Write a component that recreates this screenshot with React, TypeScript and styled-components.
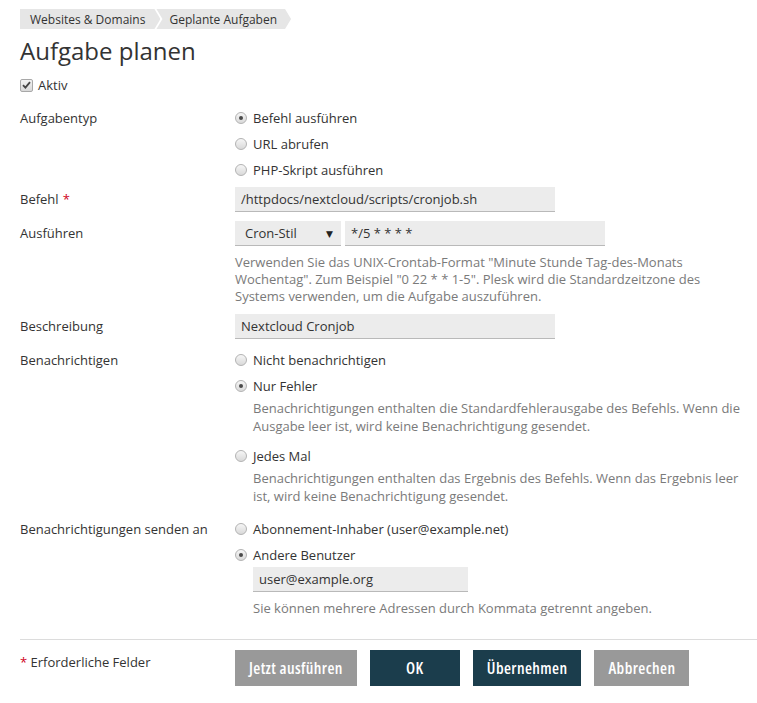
import React from "react";
import styled, { createGlobalStyle } from "styled-components";

const Global = createGlobalStyle`
  html, body { margin: 0; padding: 0; background: #fff; }
  body { font-family: "Open Sans", "DejaVu Sans", sans-serif; font-size: 13px; color: #333; }
  * { box-sizing: border-box; }
`;

const Page = styled.div`
  padding: 9px 0 16px 20px;
`;

const Crumbs = styled.nav`
  display: flex;
  height: 20px;
`;

const Crumb = styled.span<{ $first?: boolean }>`
  display: flex;
  align-items: center;
  height: 20px;
  background: #e6e6e6;
  font-size: 12px;
  color: #333;
  padding: ${(p) => (p.$first ? "0 15px 0 10px" : "0 14px 0 13px")};
  margin-left: ${(p) => (p.$first ? "0" : "-4px")};
  clip-path: ${(p) =>
    p.$first
      ? "polygon(0 0, calc(100% - 6px) 0, 100% 50%, calc(100% - 6px) 100%, 0 100%)"
      : "polygon(0 0, calc(100% - 6px) 0, 100% 50%, calc(100% - 6px) 100%, 0 100%, 6px 50%)"};
`;

const Title = styled.h1`
  margin: 6px 0 0;
  font-size: 24px;
  line-height: 32px;
  font-weight: 400;
  color: #333;
`;

const CheckLine = styled.label`
  display: flex;
  align-items: center;
  gap: 5px;
  height: 18px;
  margin-top: 9px;
`;

const CheckBox = styled.span`
  width: 13px;
  height: 13px;
  border: 1px solid #a8a8a8;
  border-radius: 2px;
  background: linear-gradient(#f2f2f2, #d8d8d8);
  display: flex;
  align-items: center;
  justify-content: center;
`;

const Form = styled.div`
  display: grid;
  grid-template-columns: 215px 1fr;
  align-items: start;
  margin-top: 15px;
`;

const Label = styled.div<{ $mt?: number }>`
  margin-top: ${(p) => p.$mt ?? 0}px;
  line-height: 18px;
  display: flex;
  align-items: center;
  gap: 4px;
`;

const Req = styled.span`
  color: #d0021b;
`;

const Cell = styled.div<{ $mt?: number }>`
  margin-top: ${(p) => p.$mt ?? 0}px;
  display: flex;
  flex-direction: column;
`;

const RadioList = styled.div`
  display: flex;
  flex-direction: column;
`;

const RadioItem = styled.label<{ $mt?: number }>`
  display: flex;
  align-items: center;
  gap: 6px;
  height: 18px;
  margin-top: ${(p) => p.$mt ?? 0}px;
`;

const RadioCircle = styled.span<{ $on?: boolean }>`
  width: 12px;
  height: 12px;
  border-radius: 50%;
  border: 1px solid #b3b3b3;
  background: linear-gradient(#f6f6f6, #d9d9d9);
  display: flex;
  align-items: center;
  justify-content: center;
  &::after {
    content: "";
    width: 4px;
    height: 4px;
    border-radius: 50%;
    background: ${(p) => (p.$on ? "#4a4a4a" : "transparent")};
  }
`;

const Field = styled.div<{ $w: number }>`
  width: ${(p) => p.$w}px;
  height: 25px;
  background: #ececec;
  border-bottom: 1px solid #b9b9b9;
  padding: 0 6px;
  display: flex;
  align-items: center;
  color: #333;
`;

const InlineRow = styled.div`
  display: flex;
  gap: 4px;
  height: 25px;
`;

const SelectBox = styled.div`
  width: 106px;
  height: 25px;
  background: #ececec;
  border-bottom: 1px solid #b9b9b9;
  padding: 0 8px 0 10px;
  display: flex;
  align-items: center;
  justify-content: space-between;
`;

const Caret = styled.span`
  font-size: 9px;
  color: #222;
`;

const Help = styled.div<{ $mt?: number; $lh?: number; $indent?: boolean }>`
  margin-top: ${(p) => p.$mt ?? 0}px;
  margin-left: ${(p) => (p.$indent ? 18 : 0)}px;
  line-height: ${(p) => p.$lh ?? 17}px;
  color: #7a7a7a;
  max-width: 510px;
`;

const Indent = styled.div<{ $mt?: number }>`
  margin-left: 18px;
  margin-top: ${(p) => p.$mt ?? 0}px;
`;

const Divider = styled.hr`
  border: none;
  border-top: 1px solid #dcdcdc;
  margin: 22px 0 0;
`;

const Footer = styled.div`
  display: grid;
  grid-template-columns: 215px 1fr;
  align-items: start;
  margin-top: 10px;
`;

const FootNote = styled.div`
  line-height: 18px;
  margin-top: 3px;
`;

const Buttons = styled.div`
  display: flex;
  gap: 13px;
`;

const Btn = styled.button<{ $primary?: boolean }>`
  height: 36px;
  min-width: 90px;
  padding: 0 14px;
  border: none;
  background: ${(p) => (p.$primary ? "#1b3d4c" : "#999999")};
  color: #fff;
  font-family: "Open Sans", "DejaVu Sans Condensed", sans-serif;
  font-stretch: 80%;
  font-weight: 600;
  font-size: 16px;
  letter-spacing: 0.4px;
  cursor: pointer;
`;

const Radio = ({ on, children, mt }: { on?: boolean; children: React.ReactNode; mt?: number }) => (
  <RadioItem $mt={mt}>
    <RadioCircle $on={on} />
    <span>{children}</span>
  </RadioItem>
);

export default function App() {
  return (
    <Page>
      <Global />
      <Crumbs>
        <Crumb $first>Websites &amp; Domains</Crumb>
        <Crumb>Geplante Aufgaben</Crumb>
      </Crumbs>
      <Title>Aufgabe planen</Title>
      <CheckLine>
        <CheckBox>
          <svg width="9" height="8" viewBox="0 0 9 8">
            <path d="M1 4.2 L3.4 6.6 L8 1.2" fill="none" stroke="#444" strokeWidth="1.8" />
          </svg>
        </CheckBox>
        <span>Aktiv</span>
      </CheckLine>

      <Form>
        <Label>Aufgabentyp</Label>
        <Cell>
          <RadioList>
            <Radio on>Befehl ausführen</Radio>
            <Radio mt={8}>URL abrufen</Radio>
            <Radio mt={8}>PHP-Skript ausführen</Radio>
          </RadioList>
        </Cell>

        <Label $mt={11}>
          Befehl <Req>*</Req>
        </Label>
        <Cell $mt={8}>
          <Field $w={320}>/httpdocs/nextcloud/scripts/cronjob.sh</Field>
        </Cell>

        <Label $mt={12}>Ausführen</Label>
        <Cell $mt={9}>
          <InlineRow>
            <SelectBox>
              <span>Cron-Stil</span>
              <Caret>▼</Caret>
            </SelectBox>
            <Field $w={260}>*/5 * * * *</Field>
          </InlineRow>
          <Help $mt={8}>
            Verwenden Sie das UNIX-Crontab-Format "Minute Stunde Tag-des-Monats Wochentag". Zum Beispiel "0 22 * * 1-5". Plesk wird die Standardzeitzone des Systems verwenden, um die Aufgabe auszuführen.
          </Help>
        </Cell>

        <Label $mt={12}>Beschreibung</Label>
        <Cell $mt={9}>
          <Field $w={320}>Nextcloud Cronjob</Field>
        </Cell>

        <Label $mt={12}>Benachrichtigen</Label>
        <Cell $mt={12}>
          <RadioList>
            <Radio>Nicht benachrichtigen</Radio>
            <Radio on mt={8}>Nur Fehler</Radio>
            <Help $mt={4} $lh={18} $indent>
              Benachrichtigungen enthalten die Standardfehlerausgabe des Befehls. Wenn die Ausgabe leer ist, wird keine Benachrichtigung gesendet.
            </Help>
            <Radio mt={12}>Jedes Mal</Radio>
            <Help $mt={4} $lh={18} $indent>
              Benachrichtigungen enthalten das Ergebnis des Befehls. Wenn das Ergebnis leer ist, wird keine Benachrichtigung gesendet.
            </Help>
          </RadioList>
        </Cell>

        <Label $mt={15}>Benachrichtigungen senden an</Label>
        <Cell $mt={15}>
          <RadioList>
            <Radio>Abonnement-Inhaber (user@example.net)</Radio>
            <Radio on mt={8}>Andere Benutzer</Radio>
            <Indent $mt={3}>
              <Field $w={215}>user@example.org</Field>
            </Indent>
            <Help $mt={7} $lh={18} $indent>
              Sie können mehrere Adressen durch Kommata getrennt angeben.
            </Help>
          </RadioList>
        </Cell>
      </Form>

      <Divider />

      <Footer>
        <FootNote>
          <Req>*</Req> Erforderliche Felder
        </FootNote>
        <Buttons>
          <Btn>Jetzt ausführen</Btn>
          <Btn $primary>OK</Btn>
          <Btn $primary>Übernehmen</Btn>
          <Btn>Abbrechen</Btn>
        </Buttons>
      </Footer>
    </Page>
  );
}
